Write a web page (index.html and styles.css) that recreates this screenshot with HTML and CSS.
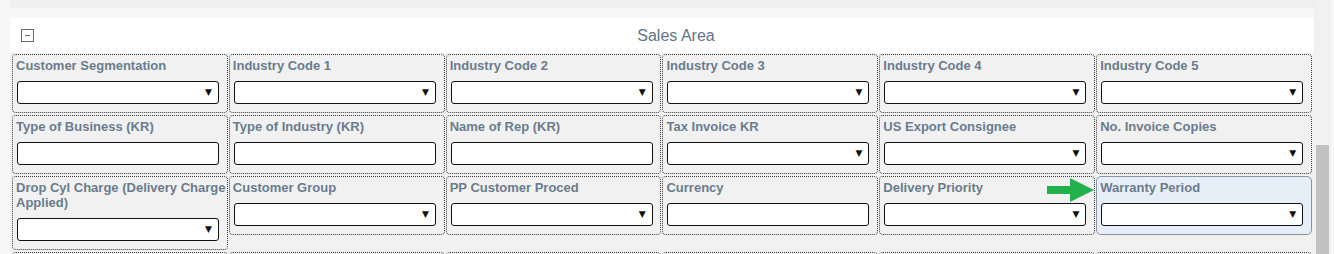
FILE: index.html
```html
<!DOCTYPE html>
<html>
<head>
<meta charset="utf-8">
<link rel="stylesheet" href="styles.css">
</head>
<body>
<div class="page">
  <div class="topstrip"></div>
  <div class="spacer"></div>
  <div class="panel">
    <span class="toggle"><span class="minus"></span></span>
    <div class="title">Sales Area</div>
  </div>
  <div class="grid">
    <div class="cell"><div class="label">Customer Segmentation</div><div class="field select"><span class="arrow">▼</span></div></div>
    <div class="cell"><div class="label">Industry Code 1</div><div class="field select"><span class="arrow">▼</span></div></div>
    <div class="cell"><div class="label">Industry Code 2</div><div class="field select"><span class="arrow">▼</span></div></div>
    <div class="cell"><div class="label">Industry Code 3</div><div class="field select"><span class="arrow">▼</span></div></div>
    <div class="cell"><div class="label">Industry Code 4</div><div class="field select"><span class="arrow">▼</span></div></div>
    <div class="cell"><div class="label">Industry Code 5</div><div class="field select"><span class="arrow">▼</span></div></div>

    <div class="cell"><div class="label">Type of Business (KR)</div><div class="field"></div></div>
    <div class="cell"><div class="label">Type of Industry (KR)</div><div class="field"></div></div>
    <div class="cell"><div class="label">Name of Rep (KR)</div><div class="field"></div></div>
    <div class="cell"><div class="label">Tax Invoice KR</div><div class="field select"><span class="arrow">▼</span></div></div>
    <div class="cell"><div class="label">US Export Consignee</div><div class="field select"><span class="arrow">▼</span></div></div>
    <div class="cell"><div class="label">No. Invoice Copies</div><div class="field select"><span class="arrow">▼</span></div></div>

    <div class="cell"><div class="label">Drop Cyl Charge (Delivery Charge Applied)</div><div class="field select"><span class="arrow">▼</span></div></div>
    <div class="cell"><div class="label">Customer Group</div><div class="field select"><span class="arrow">▼</span></div></div>
    <div class="cell"><div class="label">PP Customer Proced</div><div class="field select"><span class="arrow">▼</span></div></div>
    <div class="cell"><div class="label">Currency</div><div class="field"></div></div>
    <div class="cell"><div class="label">Delivery Priority</div><div class="field select"><span class="arrow">▼</span></div></div>
    <div class="cell highlight">
      <svg class="pointer" width="48" height="24" viewBox="0 0 48 24"><path d="M0 8 H23 V0 L47 12 L23 24 V16 H0 Z" fill="#22b14c"/></svg>
      <div class="label">Warranty Period</div><div class="field select"><span class="arrow">▼</span></div>
    </div>

    <div class="cell"><div class="label">&nbsp;</div><div class="field"></div></div>
    <div class="cell"><div class="label">&nbsp;</div><div class="field"></div></div>
    <div class="cell"><div class="label">&nbsp;</div><div class="field"></div></div>
    <div class="cell"><div class="label">&nbsp;</div><div class="field"></div></div>
    <div class="cell"><div class="label">&nbsp;</div><div class="field"></div></div>
    <div class="cell"><div class="label">&nbsp;</div><div class="field"></div></div>
  </div>
</div>
<div class="scrollbar"><div class="thumb"></div></div>
</body>
</html>
```
FILE: styles.css
```css
html, body {
  margin: 0;
  padding: 0;
}
body {
  background: #f7f7f8;
  display: flex;
  align-items: flex-start;
  height: 254px;
  overflow: hidden;
  font-family: "Liberation Sans", Arial, sans-serif;
}
.page {
  flex: none;
  width: 1304px;
  margin-left: 10px;
}
.topstrip {
  height: 8px;
  background: #f0f0f0;
}
.spacer {
  height: 10px;
}
.panel {
  height: 35px;
  background: #ffffff;
  display: flex;
  align-items: center;
}
.toggle {
  flex: none;
  box-sizing: border-box;
  width: 13px;
  height: 13px;
  margin-left: 11px;
  margin-bottom: 1px;
  border: 1px solid #5f6b75;
  display: flex;
  align-items: center;
  justify-content: center;
}
.minus {
  width: 5px;
  height: 1px;
  background: #5f6b75;
}
.title {
  flex: 1;
  text-align: center;
  font-size: 16px;
  color: #5f7488;
  padding-left: 4px;
  margin-top: 1px;
}
.grid {
  background: #f1f1f1;
  display: grid;
  grid-template-columns: repeat(6, 1fr);
  column-gap: 1px;
  row-gap: 2px;
  align-items: start;
  padding: 1px 2px 0 2px;
}
.cell {
  position: relative;
  box-sizing: border-box;
  border: 1px dotted #3a3a3a;
  border-radius: 4px;
  padding: 3px 0 8px 3px;
  min-width: 0;
}
.cell.highlight {
  background: #e6eef8;
  border: 1px solid #8796a5;
  border-radius: 5px;
}
.label {
  font-size: 13px;
  font-weight: bold;
  line-height: 15px;
  color: #6a7c8e;
  margin-right: -4px;
}
.field {
  position: relative;
  box-sizing: border-box;
  width: 202px;
  height: 23px;
  margin: 8px 0 0 1px;
  background: #ffffff;
  border: 1px solid #111;
  border-radius: 3px;
}
.arrow {
  position: absolute;
  right: 6px;
  top: 5px;
  font-size: 9px;
  line-height: 11px;
  color: #111;
  font-family: "DejaVu Sans", sans-serif;
}
.pointer {
  position: absolute;
  left: -50px;
  top: 1px;
}
.scrollbar {
  flex: none;
  width: 17px;
  height: 254px;
  background: #f1f1f1;
}
.thumb {
  margin: 145px 2px 0 2px;
  height: 120px;
  background: #c1c1c1;
}
```
